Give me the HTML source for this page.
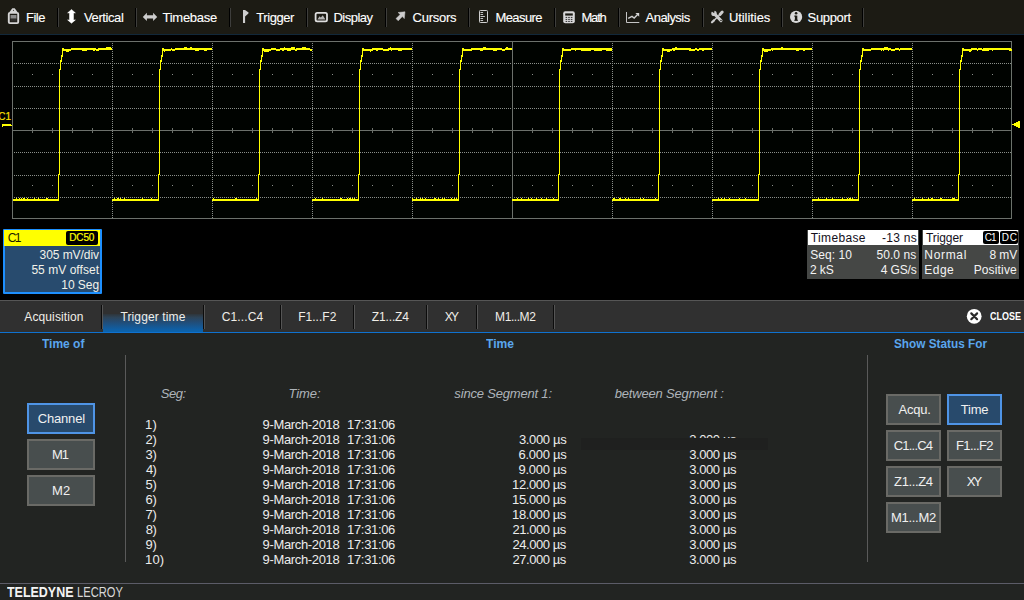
<!DOCTYPE html>
<html lang="en">
<head>
<meta charset="utf-8">
<title>Trigger time status</title>
<style>
html,body{margin:0;padding:0;background:#000;}
body{width:1024px;height:600px;overflow:hidden;position:relative;font-family:"Liberation Sans",sans-serif;}
.a{position:absolute;}
.t{position:absolute;white-space:pre;font-family:"Liberation Sans",sans-serif;}
.mn{-webkit-text-stroke:0.12px #fff;}
.sk{-webkit-text-stroke:0.2px currentColor;}
#menubar{left:0;top:0;width:1024px;height:34px;background:#1c1b14;border-bottom:1px solid #12283a;}
.sep{position:absolute;top:8px;width:1px;height:19px;background:#000;border-right:1px solid #3e3e3c;}
#tabbar{left:0;top:300px;width:1024px;height:31px;background:#303030;border-top:1px solid #565656;border-bottom:1px solid #0f72d0;}
.tsep{position:absolute;top:4px;width:1px;height:24px;background:#0c0c0c;border-right:1px solid #555;}
#activetab{left:103px;top:0;width:100px;height:31px;background:linear-gradient(to bottom,#303030 0,#303030 12.5px,#2e373e 13.5px,#2d4458 16.5px,#234b73 20.5px,#19558c 24.5px,#0f5fa5 28.5px,#0a64af 31px);}
#panel{left:0;top:333px;width:1024px;height:267px;background:#222422;}
.vdiv{position:absolute;width:1px;background:#5a5a5a;}
.btn{position:absolute;box-sizing:border-box;border:2px solid #6a6a66;background:#484e4e;}
.btn.on{border-color:#4f94e6;background:#284a6c;}
#footline{left:0;top:583px;width:1024px;height:1px;background:#5c5c68;}
.box{position:absolute;}
</style>
</head>
<body>
<div id="menubar" class="a">
<div class="sep" style="left:57px"></div>
<div class="sep" style="left:135px"></div>
<div class="sep" style="left:229px"></div>
<div class="sep" style="left:306px"></div>
<div class="sep" style="left:385px"></div>
<div class="sep" style="left:468px"></div>
<div class="sep" style="left:554px"></div>
<div class="sep" style="left:618px"></div>
<div class="sep" style="left:702px"></div>
<div class="sep" style="left:781px"></div>
<div class="sep" style="left:862px"></div>
<svg class="a" style="left:0;top:0" width="1024" height="34" viewBox="0 0 1024 34">
<!-- File: clipboard -->
<g>
<path d="M9.9 12.6 L9.9 11.6 L12.3 8.2 L14.7 8.2 L17.1 11.6 L17.1 12.6z" fill="#d2d2d2"/>
<rect x="8.8" y="12.9" width="9.4" height="10.2" rx="1.1" fill="none" stroke="#d6d6d6" stroke-width="1.9"/>
<rect x="10.5" y="15" width="6" height="3.7" fill="#8c8c8c"/>
<rect x="10.5" y="18.7" width="6" height="2.8" fill="#2e2d2a"/>
<circle cx="13.5" cy="10.4" r="0.55" fill="#55544f"/>
</g>
<!-- Vertical arrow -->
<path d="M71.5 9.5 L75.4 12.9 L73.5 12.9 L73.5 19.9 L75.4 19.9 L71.5 23.3 L67.6 19.9 L69.5 19.9 L69.5 12.9 L67.6 12.9z" fill="#ffffff" stroke="#ffffff" stroke-width="0.5" stroke-linejoin="round"/>
<!-- Timebase arrow -->
<path d="M142.8 16.9 L146.9 12.8 L146.9 15.2 L153.1 15.2 L153.1 12.8 L157.2 16.9 L153.1 21 L153.1 18.6 L146.9 18.6 L146.9 21z" fill="#cdcdcd"/>
<!-- Trigger flag -->
<path d="M243 10 L245 10 L248.6 12.6 L248.4 13.6 L245.1 16.6 L245.1 23 L243 23z" fill="#cdcdcd"/>
<!-- Display -->
<rect x="315.6" y="12.8" width="11.4" height="8.6" rx="1.6" fill="none" stroke="#dedede" stroke-width="1.8"/>
<path d="M317.4 19.4 L319.6 16.2 L320.8 17.4 L322.8 15.2 L325.4 19.4z" fill="#b4b4b4"/>
<!-- Cursors arrow -->
<path d="M405 11.8 L404.3 18.6 L402.3 16.6 L398.2 20.8 L396 18.6 L400.2 14.5 L398.1 12.5z" fill="#cdcdcd" stroke="#cdcdcd" stroke-width="0.5" stroke-linejoin="round"/>
<!-- Measure ruler -->
<rect x="479.5" y="10.5" width="8" height="12" rx="0.8" fill="none" stroke="#cfcfcf" stroke-width="1"/>
<path d="M480.5 12.5h2.6M480.5 14.5h2.6M480.5 16.5h4.4M480.5 18.5h2.6M480.5 20.5h2.6" stroke="#c4c4c4" stroke-width="1"/>
<!-- Math calculator -->
<rect x="563.2" y="11.3" width="11.6" height="12" rx="2" fill="#d8d8d8"/>
<rect x="565.2" y="13.4" width="7.6" height="2.2" fill="#1c1b14"/>
<path d="M565.6 17.4h1.6M568.2 17.4h1.6M570.8 17.4h1.6M565.6 19.4h1.6M568.2 19.4h1.6M570.8 19.4h1.6M565.6 21.4h1.6M568.2 21.4h1.6M570.8 21.4h1.6" stroke="#2a2a2a" stroke-width="1"/>
<!-- Analysis -->
<path d="M626.5 12 V22.5 H639.3" fill="none" stroke="#c4c4c4" stroke-width="1"/>
<path d="M628.2 18.4 L632 16.4 L634.2 18 L637.6 14.6" fill="none" stroke="#cfcfcf" stroke-width="1.4"/>
<path d="M635.4 13 L639.2 13 L639.2 16.8z" fill="#d6d6d6"/>
<!-- Utilities -->
<g fill="none" stroke="#cdcdcd" stroke-linecap="round">
<path d="M715.2 14.6 L721 20.6" stroke-width="3"/>
<path d="M722.2 12.1 L720 14.5" stroke-width="3"/>
<path d="M719.4 15.2 L713.6 20.8" stroke-width="1.5" stroke-linecap="butt"/>
<path d="M714 20.4 L712 22.3" stroke-width="2.2"/>
</g>
<circle cx="714" cy="13.4" r="2.7" fill="#cdcdcd"/>
<path d="M710.4 10.6 L714.2 13.2 L714.6 9.6 z" fill="#1c1b14"/>
<circle cx="721" cy="20.6" r="0.75" fill="#1c1b14"/>
<!-- Support -->
<circle cx="796.1" cy="16.9" r="6.1" fill="#d8d8d8"/>
<rect x="794.9" y="15.6" width="2.4" height="5" fill="#1c1b14"/>
<rect x="794.2" y="15.6" width="1.4" height="1" fill="#1c1b14"/>
<rect x="794.2" y="19.8" width="3.8" height="0.9" fill="#1c1b14"/>
<circle cx="796.1" cy="13.3" r="1.3" fill="#1c1b14"/>
</svg>

</div>
<svg width="1024" height="190" viewBox="0 35 1024 190" style="position:absolute;left:0;top:35px" shape-rendering="crispEdges">
<rect x="12" y="41" width="1000" height="178" fill="#000300"/>
<line x1="14" x2="1011" y1="63.5" y2="63.5" stroke="#8a8f8a" stroke-width="1" stroke-dasharray="1 1" stroke-dashoffset="0"/>
<line x1="14" x2="1011" y1="86.5" y2="86.5" stroke="#8a8f8a" stroke-width="1" stroke-dasharray="1 1" stroke-dashoffset="0"/>
<line x1="14" x2="1011" y1="108.5" y2="108.5" stroke="#8a8f8a" stroke-width="1" stroke-dasharray="1 1" stroke-dashoffset="0"/>
<line x1="14" x2="1011" y1="152.5" y2="152.5" stroke="#8a8f8a" stroke-width="1" stroke-dasharray="1 1" stroke-dashoffset="0"/>
<line x1="14" x2="1011" y1="175.5" y2="175.5" stroke="#8a8f8a" stroke-width="1" stroke-dasharray="1 1" stroke-dashoffset="0"/>
<line x1="14" x2="1011" y1="197.5" y2="197.5" stroke="#8a8f8a" stroke-width="1" stroke-dasharray="1 1" stroke-dashoffset="0"/>
<line y1="43" y2="218" x1="112.5" x2="112.5" stroke="#8a8f8a" stroke-width="1" stroke-dasharray="1 1"/>
<line y1="43" y2="218" x1="212.5" x2="212.5" stroke="#8a8f8a" stroke-width="1" stroke-dasharray="1 1"/>
<line y1="43" y2="218" x1="312.5" x2="312.5" stroke="#8a8f8a" stroke-width="1" stroke-dasharray="1 1"/>
<line y1="43" y2="218" x1="412.5" x2="412.5" stroke="#8a8f8a" stroke-width="1" stroke-dasharray="1 1"/>
<line y1="43" y2="218" x1="612.5" x2="612.5" stroke="#8a8f8a" stroke-width="1" stroke-dasharray="1 1"/>
<line y1="43" y2="218" x1="712.5" x2="712.5" stroke="#8a8f8a" stroke-width="1" stroke-dasharray="1 1"/>
<line y1="43" y2="218" x1="812.5" x2="812.5" stroke="#8a8f8a" stroke-width="1" stroke-dasharray="1 1"/>
<line y1="43" y2="218" x1="912.5" x2="912.5" stroke="#8a8f8a" stroke-width="1" stroke-dasharray="1 1"/>
<path d="M32 74.5h1M52 74.5h1M72 74.5h1M92 74.5h1M132 74.5h1M152 74.5h1M172 74.5h1M192 74.5h1M232 74.5h1M252 74.5h1M272 74.5h1M292 74.5h1M332 74.5h1M352 74.5h1M372 74.5h1M392 74.5h1M432 74.5h1M452 74.5h1M472 74.5h1M492 74.5h1M532 74.5h1M552 74.5h1M572 74.5h1M592 74.5h1M632 74.5h1M652 74.5h1M672 74.5h1M692 74.5h1M732 74.5h1M752 74.5h1M772 74.5h1M792 74.5h1M832 74.5h1M852 74.5h1M872 74.5h1M892 74.5h1M932 74.5h1M952 74.5h1M972 74.5h1M992 74.5h1M32 185.5h1M52 185.5h1M72 185.5h1M92 185.5h1M132 185.5h1M152 185.5h1M172 185.5h1M192 185.5h1M232 185.5h1M252 185.5h1M272 185.5h1M292 185.5h1M332 185.5h1M352 185.5h1M372 185.5h1M392 185.5h1M432 185.5h1M452 185.5h1M472 185.5h1M492 185.5h1M532 185.5h1M552 185.5h1M572 185.5h1M592 185.5h1M632 185.5h1M652 185.5h1M672 185.5h1M692 185.5h1M732 185.5h1M752 185.5h1M772 185.5h1M792 185.5h1M832 185.5h1M852 185.5h1M872 185.5h1M892 185.5h1M932 185.5h1M952 185.5h1M972 185.5h1M992 185.5h1" stroke="#8a8f8a" stroke-width="1" fill="none"/>
<line x1="12" x2="1012" y1="130.5" y2="130.5" stroke="#6c716b"/>
<line x1="512.5" x2="512.5" y1="41" y2="219" stroke="#6c716b"/>
<path d="M32.5 128v5M52.5 128v5M72.5 128v5M92.5 128v5M132.5 128v5M152.5 128v5M172.5 128v5M192.5 128v5M232.5 128v5M252.5 128v5M272.5 128v5M292.5 128v5M332.5 128v5M352.5 128v5M372.5 128v5M392.5 128v5M432.5 128v5M452.5 128v5M472.5 128v5M492.5 128v5M532.5 128v5M552.5 128v5M572.5 128v5M592.5 128v5M632.5 128v5M652.5 128v5M672.5 128v5M692.5 128v5M732.5 128v5M752.5 128v5M772.5 128v5M792.5 128v5M832.5 128v5M852.5 128v5M872.5 128v5M892.5 128v5M932.5 128v5M952.5 128v5M972.5 128v5M992.5 128v5" stroke="#6c716b" fill="none"/>
<rect x="12.5" y="41.5" width="999" height="177" fill="none" stroke="#6c716b"/>
<path d="M13 199h1v2h-1zM14 199h1v2h-1zM15 199h1v2h-1zM16 198h1v3h-1zM17 199h1v2h-1zM18 199h1v2h-1zM19 198h1v3h-1zM20 199h1v2h-1zM21 198h1v3h-1zM22 199h1v2h-1zM23 198h1v3h-1zM24 198h1v3h-1zM25 199h1v2h-1zM26 199h1v2h-1zM27 198h1v3h-1zM28 199h1v2h-1zM29 199h1v2h-1zM30 199h1v2h-1zM31 199h1v2h-1zM32 199h1v2h-1zM33 199h1v2h-1zM34 198h1v3h-1zM35 199h1v2h-1zM36 199h1v2h-1zM37 199h1v2h-1zM38 198h1v3h-1zM39 199h1v2h-1zM40 199h1v2h-1zM41 199h1v2h-1zM42 199h1v2h-1zM43 199h1v2h-1zM44 199h1v2h-1zM45 199h1v2h-1zM46 198h1v3h-1zM47 198h1v3h-1zM48 199h1v2h-1zM49 199h1v2h-1zM50 199h1v2h-1zM51 199h1v2h-1zM52 199h1v2h-1zM53 199h1v2h-1zM54 199h1v2h-1zM55 199h1v2h-1zM56 199h1v2h-1zM57 199h1v2h-1zM58 199h1v2h-1zM58 174h1v27h-1zM59 69h1v106h-1zM60 60h1v10h-1zM61 55h1v7h-1zM62 48h1v9h-1zM63 48h1v3h-1zM64 49h1v2h-1zM65 49h1v2h-1zM66 49h1v3h-1zM67 49h1v3h-1zM68 49h1v3h-1zM69 49h1v2h-1zM70 49h1v2h-1zM71 48h1v2h-1zM72 48h1v2h-1zM73 48h1v2h-1zM74 48h1v2h-1zM75 48h1v2h-1zM76 48h1v2h-1zM77 48h1v2h-1zM78 48h1v2h-1zM79 48h1v2h-1zM80 48h1v2h-1zM81 48h1v2h-1zM82 48h1v3h-1zM83 48h1v3h-1zM84 48h1v3h-1zM85 48h1v3h-1zM86 48h1v3h-1zM87 48h1v2h-1zM88 48h1v2h-1zM89 48h1v2h-1zM90 48h1v2h-1zM91 48h1v2h-1zM92 48h1v2h-1zM93 48h1v3h-1zM94 48h1v3h-1zM95 48h1v2h-1zM96 49h1v2h-1zM97 49h1v2h-1zM98 48h1v3h-1zM99 48h1v2h-1zM100 48h1v2h-1zM101 48h1v2h-1zM102 48h1v2h-1zM103 48h1v2h-1zM104 48h1v2h-1zM105 48h1v2h-1zM106 47h1v3h-1zM107 47h1v3h-1zM108 47h1v3h-1zM109 47h1v3h-1zM110 47h1v3h-1zM111 48h1v2h-1zM112 199h1v2h-1zM113 199h1v2h-1zM114 198h1v3h-1zM115 199h1v2h-1zM116 199h1v2h-1zM117 198h1v3h-1zM118 198h1v3h-1zM119 199h1v2h-1zM120 198h1v3h-1zM121 199h1v2h-1zM122 199h1v2h-1zM123 199h1v2h-1zM124 198h1v3h-1zM125 199h1v2h-1zM126 199h1v2h-1zM127 199h1v2h-1zM128 199h1v2h-1zM129 199h1v2h-1zM130 199h1v2h-1zM131 199h1v2h-1zM132 199h1v2h-1zM133 199h1v2h-1zM134 199h1v2h-1zM135 199h1v2h-1zM136 199h1v2h-1zM137 199h1v2h-1zM138 199h1v2h-1zM139 199h1v2h-1zM140 199h1v2h-1zM141 199h1v2h-1zM142 198h1v3h-1zM143 199h1v2h-1zM144 199h1v2h-1zM145 199h1v2h-1zM146 199h1v2h-1zM147 199h1v2h-1zM148 199h1v2h-1zM149 199h1v2h-1zM150 199h1v2h-1zM151 198h1v3h-1zM152 199h1v2h-1zM153 199h1v2h-1zM154 199h1v2h-1zM155 199h1v2h-1zM156 199h1v2h-1zM157 199h1v2h-1zM158 198h1v3h-1zM158 174h1v27h-1zM159 69h1v106h-1zM160 60h1v10h-1zM161 55h1v7h-1zM162 48h1v9h-1zM163 48h1v3h-1zM164 49h1v3h-1zM165 49h1v2h-1zM166 49h1v2h-1zM167 49h1v2h-1zM168 49h1v2h-1zM169 49h1v2h-1zM170 49h1v2h-1zM171 48h1v2h-1zM172 49h1v2h-1zM173 49h1v2h-1zM174 49h1v2h-1zM175 48h1v2h-1zM176 48h1v2h-1zM177 48h1v2h-1zM178 48h1v2h-1zM179 48h1v2h-1zM180 48h1v2h-1zM181 48h1v2h-1zM182 48h1v2h-1zM183 48h1v2h-1zM184 47h1v3h-1zM185 47h1v3h-1zM186 47h1v3h-1zM187 48h1v2h-1zM188 48h1v2h-1zM189 48h1v2h-1zM190 47h1v3h-1zM191 47h1v3h-1zM192 48h1v2h-1zM193 48h1v2h-1zM194 48h1v2h-1zM195 48h1v3h-1zM196 48h1v3h-1zM197 48h1v3h-1zM198 48h1v3h-1zM199 48h1v2h-1zM200 48h1v2h-1zM201 48h1v2h-1zM202 48h1v2h-1zM203 48h1v2h-1zM204 48h1v3h-1zM205 48h1v3h-1zM206 48h1v3h-1zM207 48h1v2h-1zM208 48h1v2h-1zM209 48h1v2h-1zM210 48h1v2h-1zM211 48h1v2h-1zM212 199h1v2h-1zM213 198h1v3h-1zM214 199h1v2h-1zM215 199h1v2h-1zM216 199h1v2h-1zM217 199h1v2h-1zM218 199h1v2h-1zM219 199h1v2h-1zM220 199h1v2h-1zM221 199h1v2h-1zM222 199h1v2h-1zM223 199h1v2h-1zM224 199h1v2h-1zM225 199h1v2h-1zM226 199h1v2h-1zM227 199h1v2h-1zM228 199h1v2h-1zM229 199h1v2h-1zM230 199h1v2h-1zM231 199h1v2h-1zM232 199h1v2h-1zM233 199h1v2h-1zM234 199h1v2h-1zM235 198h1v3h-1zM236 198h1v3h-1zM237 199h1v2h-1zM238 199h1v2h-1zM239 199h1v2h-1zM240 199h1v2h-1zM241 199h1v2h-1zM242 199h1v2h-1zM243 199h1v2h-1zM244 199h1v2h-1zM245 199h1v2h-1zM246 199h1v2h-1zM247 199h1v2h-1zM248 199h1v2h-1zM249 199h1v2h-1zM250 199h1v2h-1zM251 199h1v2h-1zM252 199h1v2h-1zM253 199h1v2h-1zM254 199h1v2h-1zM255 199h1v2h-1zM256 198h1v3h-1zM257 199h1v2h-1zM258 199h1v2h-1zM258 174h1v27h-1zM259 69h1v106h-1zM260 60h1v10h-1zM261 55h1v7h-1zM262 48h1v9h-1zM263 48h1v3h-1zM264 49h1v3h-1zM265 49h1v3h-1zM266 49h1v3h-1zM267 49h1v3h-1zM268 49h1v3h-1zM269 49h1v2h-1zM270 49h1v2h-1zM271 48h1v2h-1zM272 48h1v2h-1zM273 48h1v2h-1zM274 48h1v2h-1zM275 48h1v2h-1zM276 49h1v2h-1zM277 49h1v2h-1zM278 49h1v2h-1zM279 49h1v2h-1zM280 48h1v2h-1zM281 48h1v2h-1zM282 48h1v3h-1zM283 48h1v3h-1zM284 47h1v3h-1zM285 48h1v2h-1zM286 48h1v2h-1zM287 48h1v3h-1zM288 48h1v3h-1zM289 48h1v3h-1zM290 48h1v3h-1zM291 47h1v3h-1zM292 47h1v3h-1zM293 47h1v3h-1zM294 47h1v3h-1zM295 49h1v2h-1zM296 48h1v3h-1zM297 48h1v2h-1zM298 48h1v2h-1zM299 48h1v2h-1zM300 48h1v2h-1zM301 48h1v2h-1zM302 47h1v3h-1zM303 47h1v3h-1zM304 47h1v3h-1zM305 47h1v3h-1zM306 48h1v2h-1zM307 48h1v2h-1zM308 48h1v2h-1zM309 48h1v2h-1zM310 49h1v2h-1zM311 49h1v2h-1zM312 199h1v2h-1zM313 199h1v2h-1zM314 199h1v2h-1zM315 198h1v3h-1zM316 199h1v2h-1zM317 199h1v2h-1zM318 199h1v2h-1zM319 199h1v2h-1zM320 199h1v2h-1zM321 199h1v2h-1zM322 198h1v3h-1zM323 199h1v2h-1zM324 199h1v2h-1zM325 199h1v2h-1zM326 199h1v2h-1zM327 199h1v2h-1zM328 199h1v2h-1zM329 199h1v2h-1zM330 199h1v2h-1zM331 199h1v2h-1zM332 199h1v2h-1zM333 199h1v2h-1zM334 199h1v2h-1zM335 199h1v2h-1zM336 199h1v2h-1zM337 199h1v2h-1zM338 199h1v2h-1zM339 199h1v2h-1zM340 198h1v3h-1zM341 198h1v3h-1zM342 199h1v2h-1zM343 199h1v2h-1zM344 199h1v2h-1zM345 199h1v2h-1zM346 199h1v2h-1zM347 198h1v3h-1zM348 199h1v2h-1zM349 198h1v3h-1zM350 198h1v3h-1zM351 199h1v2h-1zM352 198h1v3h-1zM353 199h1v2h-1zM354 198h1v3h-1zM355 199h1v2h-1zM356 199h1v2h-1zM357 199h1v2h-1zM358 199h1v2h-1zM358 174h1v27h-1zM359 69h1v106h-1zM360 60h1v10h-1zM361 55h1v7h-1zM362 48h1v9h-1zM363 48h1v3h-1zM364 49h1v2h-1zM365 49h1v2h-1zM366 49h1v2h-1zM367 49h1v2h-1zM368 49h1v2h-1zM369 49h1v2h-1zM370 49h1v3h-1zM371 49h1v2h-1zM372 48h1v3h-1zM373 48h1v2h-1zM374 48h1v2h-1zM375 48h1v2h-1zM376 48h1v3h-1zM377 48h1v3h-1zM378 48h1v2h-1zM379 48h1v2h-1zM380 48h1v2h-1zM381 48h1v2h-1zM382 48h1v2h-1zM383 49h1v2h-1zM384 49h1v2h-1zM385 49h1v2h-1zM386 49h1v2h-1zM387 49h1v2h-1zM388 48h1v3h-1zM389 48h1v2h-1zM390 47h1v3h-1zM391 48h1v3h-1zM392 48h1v2h-1zM393 48h1v2h-1zM394 48h1v2h-1zM395 48h1v2h-1zM396 48h1v2h-1zM397 48h1v2h-1zM398 48h1v3h-1zM399 48h1v3h-1zM400 48h1v3h-1zM401 48h1v3h-1zM402 48h1v2h-1zM403 48h1v2h-1zM404 48h1v2h-1zM405 48h1v2h-1zM406 48h1v2h-1zM407 48h1v2h-1zM408 48h1v2h-1zM409 48h1v2h-1zM410 48h1v2h-1zM411 48h1v2h-1zM412 198h1v3h-1zM413 199h1v2h-1zM414 199h1v2h-1zM415 199h1v2h-1zM416 198h1v3h-1zM417 199h1v2h-1zM418 199h1v2h-1zM419 199h1v2h-1zM420 198h1v3h-1zM421 199h1v2h-1zM422 198h1v3h-1zM423 199h1v2h-1zM424 199h1v2h-1zM425 198h1v3h-1zM426 199h1v2h-1zM427 199h1v2h-1zM428 199h1v2h-1zM429 199h1v2h-1zM430 199h1v2h-1zM431 199h1v2h-1zM432 199h1v2h-1zM433 199h1v2h-1zM434 198h1v3h-1zM435 198h1v3h-1zM436 199h1v2h-1zM437 199h1v2h-1zM438 198h1v3h-1zM439 199h1v2h-1zM440 199h1v2h-1zM441 199h1v2h-1zM442 198h1v3h-1zM443 199h1v2h-1zM444 198h1v3h-1zM445 199h1v2h-1zM446 199h1v2h-1zM447 199h1v2h-1zM448 199h1v2h-1zM449 199h1v2h-1zM450 199h1v2h-1zM451 198h1v3h-1zM452 199h1v2h-1zM453 199h1v2h-1zM454 198h1v3h-1zM455 199h1v2h-1zM456 198h1v3h-1zM457 199h1v2h-1zM458 199h1v2h-1zM458 174h1v27h-1zM459 69h1v106h-1zM460 60h1v10h-1zM461 55h1v7h-1zM462 48h1v9h-1zM463 48h1v3h-1zM464 49h1v2h-1zM465 49h1v2h-1zM466 49h1v2h-1zM467 49h1v2h-1zM468 49h1v2h-1zM469 49h1v2h-1zM470 49h1v2h-1zM471 48h1v3h-1zM472 48h1v2h-1zM473 48h1v2h-1zM474 48h1v2h-1zM475 48h1v2h-1zM476 48h1v2h-1zM477 48h1v2h-1zM478 48h1v2h-1zM479 48h1v2h-1zM480 48h1v3h-1zM481 48h1v3h-1zM482 48h1v3h-1zM483 47h1v3h-1zM484 47h1v3h-1zM485 47h1v3h-1zM486 48h1v2h-1zM487 48h1v2h-1zM488 48h1v2h-1zM489 48h1v2h-1zM490 48h1v2h-1zM491 48h1v2h-1zM492 48h1v2h-1zM493 48h1v3h-1zM494 48h1v3h-1zM495 48h1v3h-1zM496 48h1v3h-1zM497 48h1v2h-1zM498 48h1v2h-1zM499 48h1v2h-1zM500 48h1v2h-1zM501 48h1v2h-1zM502 49h1v2h-1zM503 49h1v2h-1zM504 49h1v2h-1zM505 48h1v2h-1zM506 47h1v3h-1zM507 47h1v3h-1zM508 48h1v2h-1zM509 48h1v2h-1zM510 48h1v2h-1zM511 48h1v2h-1zM512 199h1v2h-1zM513 199h1v2h-1zM514 199h1v2h-1zM515 199h1v2h-1zM516 199h1v2h-1zM517 198h1v3h-1zM518 199h1v2h-1zM519 199h1v2h-1zM520 199h1v2h-1zM521 198h1v3h-1zM522 199h1v2h-1zM523 199h1v2h-1zM524 199h1v2h-1zM525 199h1v2h-1zM526 199h1v2h-1zM527 199h1v2h-1zM528 198h1v3h-1zM529 199h1v2h-1zM530 199h1v2h-1zM531 198h1v3h-1zM532 199h1v2h-1zM533 199h1v2h-1zM534 199h1v2h-1zM535 199h1v2h-1zM536 198h1v3h-1zM537 199h1v2h-1zM538 199h1v2h-1zM539 199h1v2h-1zM540 199h1v2h-1zM541 198h1v3h-1zM542 199h1v2h-1zM543 199h1v2h-1zM544 199h1v2h-1zM545 199h1v2h-1zM546 198h1v3h-1zM547 199h1v2h-1zM548 199h1v2h-1zM549 199h1v2h-1zM550 199h1v2h-1zM551 199h1v2h-1zM552 199h1v2h-1zM553 198h1v3h-1zM554 199h1v2h-1zM555 199h1v2h-1zM556 199h1v2h-1zM557 199h1v2h-1zM558 199h1v2h-1zM558 174h1v27h-1zM559 69h1v106h-1zM560 60h1v10h-1zM561 55h1v7h-1zM562 48h1v9h-1zM563 48h1v3h-1zM564 49h1v2h-1zM565 49h1v2h-1zM566 49h1v2h-1zM567 49h1v2h-1zM568 49h1v2h-1zM569 49h1v2h-1zM570 49h1v2h-1zM571 48h1v2h-1zM572 48h1v2h-1zM573 48h1v2h-1zM574 48h1v2h-1zM575 48h1v3h-1zM576 48h1v2h-1zM577 48h1v2h-1zM578 48h1v2h-1zM579 48h1v2h-1zM580 48h1v2h-1zM581 48h1v3h-1zM582 48h1v3h-1zM583 48h1v3h-1zM584 48h1v3h-1zM585 48h1v3h-1zM586 48h1v3h-1zM587 48h1v3h-1zM588 48h1v3h-1zM589 48h1v3h-1zM590 48h1v3h-1zM591 48h1v2h-1zM592 48h1v2h-1zM593 48h1v2h-1zM594 48h1v3h-1zM595 48h1v3h-1zM596 48h1v3h-1zM597 48h1v3h-1zM598 48h1v3h-1zM599 48h1v3h-1zM600 48h1v3h-1zM601 48h1v3h-1zM602 48h1v2h-1zM603 48h1v2h-1zM604 48h1v2h-1zM605 48h1v2h-1zM606 48h1v3h-1zM607 48h1v3h-1zM608 48h1v3h-1zM609 48h1v3h-1zM610 48h1v3h-1zM611 48h1v3h-1zM612 199h1v2h-1zM613 198h1v3h-1zM614 198h1v3h-1zM615 199h1v2h-1zM616 199h1v2h-1zM617 199h1v2h-1zM618 199h1v2h-1zM619 198h1v3h-1zM620 198h1v3h-1zM621 199h1v2h-1zM622 199h1v2h-1zM623 199h1v2h-1zM624 199h1v2h-1zM625 198h1v3h-1zM626 199h1v2h-1zM627 199h1v2h-1zM628 198h1v3h-1zM629 199h1v2h-1zM630 199h1v2h-1zM631 199h1v2h-1zM632 199h1v2h-1zM633 199h1v2h-1zM634 199h1v2h-1zM635 199h1v2h-1zM636 199h1v2h-1zM637 199h1v2h-1zM638 199h1v2h-1zM639 199h1v2h-1zM640 198h1v3h-1zM641 199h1v2h-1zM642 199h1v2h-1zM643 198h1v3h-1zM644 199h1v2h-1zM645 199h1v2h-1zM646 199h1v2h-1zM647 199h1v2h-1zM648 199h1v2h-1zM649 199h1v2h-1zM650 199h1v2h-1zM651 199h1v2h-1zM652 199h1v2h-1zM653 199h1v2h-1zM654 199h1v2h-1zM655 198h1v3h-1zM656 199h1v2h-1zM657 199h1v2h-1zM658 199h1v2h-1zM658 174h1v27h-1zM659 69h1v106h-1zM660 60h1v10h-1zM661 55h1v7h-1zM662 48h1v9h-1zM663 48h1v3h-1zM664 49h1v2h-1zM665 49h1v2h-1zM666 49h1v2h-1zM667 49h1v3h-1zM668 49h1v3h-1zM669 49h1v3h-1zM670 49h1v2h-1zM671 49h1v2h-1zM672 48h1v2h-1zM673 48h1v3h-1zM674 48h1v3h-1zM675 47h1v3h-1zM676 47h1v3h-1zM677 48h1v2h-1zM678 48h1v2h-1zM679 48h1v2h-1zM680 48h1v2h-1zM681 48h1v2h-1zM682 48h1v2h-1zM683 48h1v2h-1zM684 48h1v2h-1zM685 48h1v2h-1zM686 48h1v2h-1zM687 48h1v2h-1zM688 48h1v2h-1zM689 48h1v3h-1zM690 48h1v3h-1zM691 49h1v2h-1zM692 49h1v2h-1zM693 49h1v2h-1zM694 49h1v2h-1zM695 48h1v2h-1zM696 48h1v2h-1zM697 49h1v2h-1zM698 49h1v2h-1zM699 48h1v2h-1zM700 48h1v2h-1zM701 48h1v2h-1zM702 48h1v3h-1zM703 48h1v3h-1zM704 48h1v2h-1zM705 48h1v2h-1zM706 48h1v2h-1zM707 48h1v2h-1zM708 48h1v2h-1zM709 48h1v2h-1zM710 48h1v2h-1zM711 48h1v2h-1zM712 199h1v2h-1zM713 199h1v2h-1zM714 199h1v2h-1zM715 199h1v2h-1zM716 199h1v2h-1zM717 199h1v2h-1zM718 198h1v3h-1zM719 199h1v2h-1zM720 199h1v2h-1zM721 198h1v3h-1zM722 199h1v2h-1zM723 199h1v2h-1zM724 198h1v3h-1zM725 199h1v2h-1zM726 199h1v2h-1zM727 199h1v2h-1zM728 199h1v2h-1zM729 198h1v3h-1zM730 199h1v2h-1zM731 199h1v2h-1zM732 199h1v2h-1zM733 199h1v2h-1zM734 199h1v2h-1zM735 199h1v2h-1zM736 199h1v2h-1zM737 199h1v2h-1zM738 199h1v2h-1zM739 198h1v3h-1zM740 199h1v2h-1zM741 199h1v2h-1zM742 199h1v2h-1zM743 199h1v2h-1zM744 199h1v2h-1zM745 198h1v3h-1zM746 199h1v2h-1zM747 199h1v2h-1zM748 199h1v2h-1zM749 199h1v2h-1zM750 199h1v2h-1zM751 199h1v2h-1zM752 199h1v2h-1zM753 199h1v2h-1zM754 199h1v2h-1zM755 199h1v2h-1zM756 199h1v2h-1zM757 199h1v2h-1zM758 199h1v2h-1zM758 174h1v27h-1zM759 69h1v106h-1zM760 60h1v10h-1zM761 55h1v7h-1zM762 48h1v9h-1zM763 48h1v3h-1zM764 49h1v3h-1zM765 49h1v3h-1zM766 49h1v3h-1zM767 49h1v3h-1zM768 49h1v2h-1zM769 49h1v2h-1zM770 49h1v2h-1zM771 48h1v2h-1zM772 48h1v3h-1zM773 48h1v2h-1zM774 48h1v2h-1zM775 48h1v2h-1zM776 48h1v2h-1zM777 48h1v2h-1zM778 48h1v2h-1zM779 48h1v2h-1zM780 48h1v2h-1zM781 47h1v3h-1zM782 47h1v3h-1zM783 48h1v2h-1zM784 48h1v2h-1zM785 48h1v2h-1zM786 48h1v2h-1zM787 48h1v2h-1zM788 48h1v2h-1zM789 48h1v2h-1zM790 48h1v2h-1zM791 48h1v2h-1zM792 48h1v2h-1zM793 48h1v2h-1zM794 48h1v2h-1zM795 48h1v2h-1zM796 48h1v3h-1zM797 48h1v3h-1zM798 48h1v3h-1zM799 48h1v2h-1zM800 48h1v2h-1zM801 48h1v2h-1zM802 48h1v2h-1zM803 48h1v3h-1zM804 48h1v3h-1zM805 48h1v2h-1zM806 48h1v2h-1zM807 48h1v2h-1zM808 48h1v2h-1zM809 48h1v2h-1zM810 48h1v2h-1zM811 48h1v2h-1zM812 199h1v2h-1zM813 199h1v2h-1zM814 199h1v2h-1zM815 199h1v2h-1zM816 199h1v2h-1zM817 199h1v2h-1zM818 198h1v3h-1zM819 199h1v2h-1zM820 199h1v2h-1zM821 199h1v2h-1zM822 199h1v2h-1zM823 199h1v2h-1zM824 199h1v2h-1zM825 199h1v2h-1zM826 198h1v3h-1zM827 199h1v2h-1zM828 199h1v2h-1zM829 199h1v2h-1zM830 199h1v2h-1zM831 199h1v2h-1zM832 198h1v3h-1zM833 199h1v2h-1zM834 199h1v2h-1zM835 199h1v2h-1zM836 199h1v2h-1zM837 199h1v2h-1zM838 199h1v2h-1zM839 199h1v2h-1zM840 199h1v2h-1zM841 199h1v2h-1zM842 198h1v3h-1zM843 199h1v2h-1zM844 199h1v2h-1zM845 199h1v2h-1zM846 199h1v2h-1zM847 198h1v3h-1zM848 199h1v2h-1zM849 198h1v3h-1zM850 198h1v3h-1zM851 199h1v2h-1zM852 198h1v3h-1zM853 199h1v2h-1zM854 199h1v2h-1zM855 199h1v2h-1zM856 199h1v2h-1zM857 199h1v2h-1zM858 199h1v2h-1zM858 174h1v27h-1zM859 69h1v106h-1zM860 60h1v10h-1zM861 55h1v7h-1zM862 48h1v9h-1zM863 48h1v3h-1zM864 49h1v2h-1zM865 49h1v2h-1zM866 49h1v2h-1zM867 49h1v2h-1zM868 49h1v2h-1zM869 49h1v2h-1zM870 49h1v2h-1zM871 48h1v2h-1zM872 48h1v2h-1zM873 48h1v2h-1zM874 48h1v2h-1zM875 48h1v2h-1zM876 48h1v2h-1zM877 48h1v2h-1zM878 48h1v2h-1zM879 48h1v2h-1zM880 48h1v2h-1zM881 48h1v3h-1zM882 48h1v2h-1zM883 48h1v3h-1zM884 47h1v3h-1zM885 47h1v3h-1zM886 47h1v3h-1zM887 47h1v3h-1zM888 48h1v3h-1zM889 48h1v2h-1zM890 48h1v2h-1zM891 49h1v2h-1zM892 49h1v2h-1zM893 49h1v2h-1zM894 49h1v2h-1zM895 48h1v2h-1zM896 48h1v2h-1zM897 48h1v2h-1zM898 48h1v2h-1zM899 49h1v2h-1zM900 48h1v2h-1zM901 48h1v2h-1zM902 48h1v2h-1zM903 48h1v2h-1zM904 48h1v2h-1zM905 48h1v2h-1zM906 48h1v2h-1zM907 48h1v2h-1zM908 48h1v2h-1zM909 48h1v2h-1zM910 48h1v2h-1zM911 48h1v2h-1zM912 199h1v2h-1zM913 199h1v2h-1zM914 198h1v3h-1zM915 199h1v2h-1zM916 199h1v2h-1zM917 199h1v2h-1zM918 199h1v2h-1zM919 199h1v2h-1zM920 199h1v2h-1zM921 199h1v2h-1zM922 198h1v3h-1zM923 199h1v2h-1zM924 199h1v2h-1zM925 199h1v2h-1zM926 199h1v2h-1zM927 199h1v2h-1zM928 198h1v3h-1zM929 199h1v2h-1zM930 199h1v2h-1zM931 198h1v3h-1zM932 198h1v3h-1zM933 199h1v2h-1zM934 199h1v2h-1zM935 199h1v2h-1zM936 199h1v2h-1zM937 199h1v2h-1zM938 199h1v2h-1zM939 199h1v2h-1zM940 198h1v3h-1zM941 198h1v3h-1zM942 199h1v2h-1zM943 199h1v2h-1zM944 199h1v2h-1zM945 199h1v2h-1zM946 199h1v2h-1zM947 199h1v2h-1zM948 199h1v2h-1zM949 199h1v2h-1zM950 199h1v2h-1zM951 199h1v2h-1zM952 198h1v3h-1zM953 198h1v3h-1zM954 198h1v3h-1zM955 199h1v2h-1zM956 199h1v2h-1zM957 199h1v2h-1zM958 199h1v2h-1zM958 174h1v27h-1zM959 69h1v106h-1zM960 60h1v10h-1zM961 55h1v7h-1zM962 48h1v9h-1zM963 48h1v3h-1zM964 49h1v2h-1zM965 49h1v2h-1zM966 49h1v2h-1zM967 49h1v2h-1zM968 49h1v2h-1zM969 49h1v3h-1zM970 49h1v3h-1zM971 48h1v3h-1zM972 48h1v2h-1zM973 48h1v2h-1zM974 48h1v2h-1zM975 48h1v2h-1zM976 48h1v2h-1zM977 49h1v2h-1zM978 48h1v2h-1zM979 48h1v2h-1zM980 48h1v2h-1zM981 48h1v2h-1zM982 49h1v2h-1zM983 48h1v3h-1zM984 48h1v3h-1zM985 48h1v3h-1zM986 48h1v3h-1zM987 48h1v3h-1zM988 48h1v3h-1zM989 48h1v2h-1zM990 48h1v2h-1zM991 48h1v2h-1zM992 48h1v3h-1zM993 48h1v2h-1zM994 48h1v2h-1zM995 48h1v2h-1zM996 48h1v2h-1zM997 48h1v2h-1zM998 48h1v2h-1zM999 48h1v2h-1zM1000 48h1v2h-1zM1001 48h1v2h-1zM1002 48h1v2h-1zM1003 48h1v2h-1zM1004 48h1v2h-1zM1005 48h1v2h-1zM1006 48h1v2h-1zM1007 48h1v2h-1zM1008 48h1v2h-1zM1009 48h1v3h-1zM1010 48h1v3h-1zM1011 49h1v2h-1z" fill="#ffff00"/>
<path d="M2 124h9v1h1v1h-9v1h-1z" fill="#ffff00"/>
<path d="M1012 124h2v-1h2v-1h2v-1h2v7h-2v-1h-2v-1h-2v-1h-2z" fill="#ffff00"/>
</svg>
<!-- C1 descriptor -->
<div class="box" style="left:3px;top:229px;width:99px;height:65px;background:#1e90ff;border-radius:1px;"></div>
<div class="box" style="left:4px;top:230px;width:96px;height:16px;background:#ffff00;"></div>
<div class="box" style="left:5px;top:246px;width:95px;height:46px;background:#284b6e;"></div>
<div class="box" style="left:66px;top:231px;width:32px;height:14px;background:#000;border-radius:2px;"></div>
<!-- Timebase -->
<div class="box" style="left:807px;top:230px;width:112px;height:49px;background:#454745;"></div>
<div class="box" style="left:808px;top:230px;width:110px;height:15px;background:#fff;"></div>
<!-- Trigger -->
<div class="box" style="left:922px;top:230px;width:97px;height:49px;background:#454745;"></div>
<div class="box" style="left:923px;top:230px;width:95px;height:15px;background:#fff;"></div>
<div class="box" style="left:983px;top:231px;width:16px;height:13px;background:#000;border-radius:2px;"></div>
<div class="box" style="left:1000px;top:231px;width:18px;height:13px;background:#000;border-radius:2px;"></div>
<!-- tab bar -->
<div id="tabbar" class="a">
<div id="activetab" class="a"></div>
<div class="tsep" style="left:101px"></div>
<div class="tsep" style="left:203px"></div>
<div class="tsep" style="left:280px"></div>
<div class="tsep" style="left:353px"></div>
<div class="tsep" style="left:426px"></div>
<div class="tsep" style="left:476px"></div>
<div class="tsep" style="left:553px"></div>
<svg class="a" style="left:966px;top:7px" width="16" height="16" viewBox="0 0 16 16"><circle cx="8.2" cy="8.3" r="7.4" fill="#fff"/><path d="M5.3 5.4l5.8 5.8M11.1 5.4l-5.8 5.8" stroke="#2a2a2a" stroke-width="2.2" stroke-linecap="round"/></svg>
</div>
<div id="panel" class="a"></div>
<div class="vdiv" style="left:125px;top:355px;height:207px"></div>
<div class="vdiv" style="left:867px;top:355px;height:207px"></div>
<div class="box" style="left:581px;top:438px;width:187px;height:12px;background:#1f201f;z-index:5"></div>
<!-- left buttons -->
<div class="btn on" style="left:27px;top:403px;width:68px;height:31px"></div>
<div class="btn" style="left:27px;top:439px;width:68px;height:31px"></div>
<div class="btn" style="left:27px;top:475px;width:68px;height:31px"></div>
<!-- right buttons -->
<div class="btn" style="left:886px;top:394px;width:55px;height:31px"></div>
<div class="btn on" style="left:947px;top:394px;width:55px;height:31px"></div>
<div class="btn" style="left:886px;top:430px;width:55px;height:31px"></div>
<div class="btn" style="left:947px;top:430px;width:55px;height:31px"></div>
<div class="btn" style="left:886px;top:466px;width:55px;height:31px"></div>
<div class="btn" style="left:947px;top:466px;width:55px;height:31px"></div>
<div class="btn" style="left:886px;top:502px;width:55px;height:31px"></div>
<div id="footline" class="a"></div>
<span class="t mn" style="left:25.90px;top:11.00px;font-size:13px;line-height:13px;color:#ffffff;letter-spacing:-0.428px;">File</span>
<span class="t mn" style="left:84.02px;top:11.00px;font-size:13px;line-height:13px;color:#ffffff;letter-spacing:-0.408px;">Vertical</span>
<span class="t mn" style="left:162.49px;top:11.00px;font-size:13px;line-height:13px;color:#ffffff;letter-spacing:-0.256px;">Timebase</span>
<span class="t mn" style="left:256.27px;top:11.00px;font-size:13px;line-height:13px;color:#ffffff;letter-spacing:-0.433px;">Trigger</span>
<span class="t mn" style="left:333.43px;top:11.00px;font-size:13px;line-height:13px;color:#ffffff;letter-spacing:-0.512px;">Display</span>
<span class="t mn" style="left:412.60px;top:11.00px;font-size:13px;line-height:13px;color:#ffffff;letter-spacing:-0.250px;">Cursors</span>
<span class="t mn" style="left:495.43px;top:11.00px;font-size:13px;line-height:13px;color:#ffffff;letter-spacing:-0.569px;">Measure</span>
<span class="t mn" style="left:581.43px;top:11.00px;font-size:13px;line-height:13px;color:#ffffff;letter-spacing:-1.172px;">Math</span>
<span class="t mn" style="left:645.58px;top:11.00px;font-size:13px;line-height:13px;color:#ffffff;letter-spacing:-0.549px;">Analysis</span>
<span class="t mn" style="left:728.94px;top:11.00px;font-size:13px;line-height:13px;color:#ffffff;letter-spacing:-0.068px;">Utilities</span>
<span class="t mn" style="left:807.54px;top:11.00px;font-size:13px;line-height:13px;color:#ffffff;letter-spacing:-0.320px;">Support</span>
<span class="t" style="left:7.78px;top:232.00px;font-size:12px;line-height:12px;color:#1a1a00;letter-spacing:-1.643px;">C1</span>
<span class="t sk" style="left:69.32px;top:233.00px;font-size:10px;line-height:10px;color:#ffff00;letter-spacing:-0.168px;">DC50</span>
<span class="t" style="left:39.54px;top:249.00px;font-size:12px;line-height:12px;color:#f2f2ea;letter-spacing:-0.064px;">305 mV/div</span>
<span class="t" style="left:31.42px;top:264.00px;font-size:12px;line-height:12px;color:#f2f2ea;letter-spacing:0.039px;">55 mV offset</span>
<span class="t" style="left:61.27px;top:279.00px;font-size:12px;line-height:12px;color:#f2f2ea;letter-spacing:-0.028px;">10 Seg</span>
<span class="t" style="left:810.82px;top:232.00px;font-size:12px;line-height:12px;color:#14101c;letter-spacing:0.351px;">Timebase</span>
<span class="t" style="left:882.12px;top:232.00px;font-size:12px;line-height:12px;color:#14101c;letter-spacing:0.251px;">-13 ns</span>
<span class="t" style="left:810.26px;top:249.00px;font-size:12px;line-height:12px;color:#f4f4f4;letter-spacing:0.055px;">Seq: 10</span>
<span class="t" style="left:876.42px;top:249.00px;font-size:12px;line-height:12px;color:#f4f4f4;letter-spacing:0.092px;">50.0 ns</span>
<span class="t" style="left:809.97px;top:264.00px;font-size:12px;line-height:12px;color:#f4f4f4;letter-spacing:-0.087px;">2 kS</span>
<span class="t" style="left:880.80px;top:264.00px;font-size:12px;line-height:12px;color:#f4f4f4;letter-spacing:-0.144px;">4 GS/s</span>
<span class="t" style="left:926.10px;top:232.00px;font-size:12px;line-height:12px;color:#14101c;letter-spacing:-0.113px;">Trigger</span>
<span class="t" style="left:924.35px;top:249.00px;font-size:12px;line-height:12px;color:#f4f4f4;letter-spacing:0.664px;">Normal</span>
<span class="t" style="left:989.42px;top:249.00px;font-size:12px;line-height:12px;color:#f4f4f4;letter-spacing:-0.088px;">8 mV</span>
<span class="t" style="left:924.35px;top:264.00px;font-size:12px;line-height:12px;color:#f4f4f4;letter-spacing:0.438px;">Edge</span>
<span class="t" style="left:973.65px;top:264.00px;font-size:12px;line-height:12px;color:#f4f4f4;letter-spacing:0.150px;">Positive</span>
<span class="t" style="left:984.70px;top:233.00px;font-size:10px;line-height:10px;color:#ffffff;letter-spacing:-0.795px;">C1</span>
<span class="t" style="left:1001.85px;top:233.00px;font-size:10px;line-height:10px;color:#ffffff;letter-spacing:0.730px;">DC</span>
<span class="t sk" style="left:-1.80px;top:112.00px;font-size:10px;line-height:10px;color:#ffe000;letter-spacing:0.000px;">C1</span>
<span class="t" style="left:24.32px;top:311.00px;font-size:12px;line-height:12px;color:#f0eee8;letter-spacing:0.115px;">Acquisition</span>
<span class="t" style="left:120.48px;top:311.00px;font-size:12px;line-height:12px;color:#f0eee8;letter-spacing:0.119px;">Trigger time</span>
<span class="t" style="left:221.82px;top:311.00px;font-size:12px;line-height:12px;color:#f0eee8;letter-spacing:0.097px;">C1...C4</span>
<span class="t" style="left:298.20px;top:311.00px;font-size:12px;line-height:12px;color:#f0eee8;letter-spacing:0.033px;">F1...F2</span>
<span class="t" style="left:371.84px;top:311.00px;font-size:12px;line-height:12px;color:#f0eee8;letter-spacing:-0.146px;">Z1...Z4</span>
<span class="t" style="left:444.78px;top:311.00px;font-size:12px;line-height:12px;color:#f0eee8;letter-spacing:-1.820px;">XY</span>
<span class="t" style="left:495.10px;top:311.00px;font-size:12px;line-height:12px;color:#f0eee8;letter-spacing:-0.438px;">M1...M2</span>
<span class="t" style="left:989.92px;top:312.00px;font-size:10px;line-height:10px;color:#ffffff;letter-spacing:0.000px;font-weight:bold;transform-origin:0 0;transform:scaleX(0.8977);">CLOSE</span>
<span class="t" style="left:42.10px;top:337.00px;font-size:13.5px;line-height:13.5px;color:#5aa6ee;letter-spacing:0.000px;font-weight:bold;transform-origin:0 0;transform:scaleX(0.8881);">Time of</span>
<span class="t" style="left:486.09px;top:337.00px;font-size:13.5px;line-height:13.5px;color:#5aa6ee;letter-spacing:0.000px;font-weight:bold;transform-origin:0 0;transform:scaleX(0.8947);">Time</span>
<span class="t" style="left:893.64px;top:337.00px;font-size:13.5px;line-height:13.5px;color:#5aa6ee;letter-spacing:0.000px;font-weight:bold;transform-origin:0 0;transform:scaleX(0.8743);">Show Status For</span>
<span class="t" style="left:37.71px;top:412.00px;font-size:13px;line-height:13px;color:#f0f0f0;letter-spacing:-0.169px;">Channel</span>
<span class="t" style="left:52.11px;top:448.00px;font-size:13px;line-height:13px;color:#f0f0f0;letter-spacing:-1.102px;">M1</span>
<span class="t" style="left:52.11px;top:484.00px;font-size:13px;line-height:13px;color:#f0f0f0;letter-spacing:0.038px;">M2</span>
<span class="t" style="left:898.49px;top:403.00px;font-size:13px;line-height:13px;color:#f0f0f0;letter-spacing:-0.239px;">Acqu.</span>
<span class="t" style="left:960.79px;top:403.00px;font-size:13px;line-height:13px;color:#f0f0f0;letter-spacing:-0.217px;">Time</span>
<span class="t" style="left:893.71px;top:439.00px;font-size:13px;line-height:13px;color:#f0f0f0;letter-spacing:-0.787px;">C1...C4</span>
<span class="t" style="left:955.90px;top:439.00px;font-size:13px;line-height:13px;color:#f0f0f0;letter-spacing:-0.586px;">F1...F2</span>
<span class="t" style="left:894.05px;top:475.00px;font-size:13px;line-height:13px;color:#f0f0f0;letter-spacing:-0.357px;">Z1...Z4</span>
<span class="t" style="left:966.78px;top:475.00px;font-size:13px;line-height:13px;color:#f0f0f0;letter-spacing:-1.812px;">XY</span>
<span class="t" style="left:891.11px;top:511.00px;font-size:13px;line-height:13px;color:#f0f0f0;letter-spacing:-0.318px;">M1...M2</span>
<span class="t" style="left:160.75px;top:387.00px;font-size:13px;line-height:13px;color:#aeb4ba;letter-spacing:-0.450px;font-style:italic;">Seg:</span>
<span class="t" style="left:288.42px;top:387.00px;font-size:13px;line-height:13px;color:#aeb4ba;letter-spacing:-0.037px;font-style:italic;">Time:</span>
<span class="t" style="left:454.36px;top:387.00px;font-size:13px;line-height:13px;color:#aeb4ba;letter-spacing:-0.185px;font-style:italic;">since Segment 1:</span>
<span class="t" style="left:614.63px;top:387.00px;font-size:13px;line-height:13px;color:#aeb4ba;letter-spacing:-0.170px;font-style:italic;">between Segment :</span>
<span class="t" style="left:145.10px;top:418.00px;font-size:13px;line-height:13px;color:#ececec;letter-spacing:0.105px;">1)</span>
<span class="t" style="left:262.54px;top:418.00px;font-size:13px;line-height:13px;color:#ececec;letter-spacing:-0.348px;">9-March-2018</span>
<span class="t" style="left:347.10px;top:418.00px;font-size:13px;line-height:13px;color:#ececec;letter-spacing:-0.343px;">17:31:06</span>
<span class="t" style="left:145.62px;top:433.00px;font-size:13px;line-height:13px;color:#ececec;letter-spacing:-0.415px;">2)</span>
<span class="t" style="left:262.54px;top:433.00px;font-size:13px;line-height:13px;color:#ececec;letter-spacing:-0.348px;">9-March-2018</span>
<span class="t" style="left:347.10px;top:433.00px;font-size:13px;line-height:13px;color:#ececec;letter-spacing:-0.343px;">17:31:06</span>
<span class="t" style="left:518.96px;top:433.00px;font-size:13px;line-height:13px;color:#ececec;letter-spacing:-0.347px;">3.000 µs</span>
<span class="t" style="left:689.16px;top:433.00px;font-size:13px;line-height:13px;color:#ececec;letter-spacing:-0.396px;">3.000 µs</span>
<span class="t" style="left:145.57px;top:448.00px;font-size:13px;line-height:13px;color:#ececec;letter-spacing:-0.360px;">3)</span>
<span class="t" style="left:262.54px;top:448.00px;font-size:13px;line-height:13px;color:#ececec;letter-spacing:-0.348px;">9-March-2018</span>
<span class="t" style="left:347.10px;top:448.00px;font-size:13px;line-height:13px;color:#ececec;letter-spacing:-0.343px;">17:31:06</span>
<span class="t" style="left:518.55px;top:448.00px;font-size:13px;line-height:13px;color:#ececec;letter-spacing:-0.289px;">6.000 µs</span>
<span class="t" style="left:689.16px;top:448.00px;font-size:13px;line-height:13px;color:#ececec;letter-spacing:-0.396px;">3.000 µs</span>
<span class="t" style="left:146.10px;top:463.00px;font-size:13px;line-height:13px;color:#ececec;letter-spacing:-0.895px;">4)</span>
<span class="t" style="left:262.54px;top:463.00px;font-size:13px;line-height:13px;color:#ececec;letter-spacing:-0.348px;">9-March-2018</span>
<span class="t" style="left:347.10px;top:463.00px;font-size:13px;line-height:13px;color:#ececec;letter-spacing:-0.343px;">17:31:06</span>
<span class="t" style="left:518.54px;top:463.00px;font-size:13px;line-height:13px;color:#ececec;letter-spacing:-0.287px;">9.000 µs</span>
<span class="t" style="left:689.16px;top:463.00px;font-size:13px;line-height:13px;color:#ececec;letter-spacing:-0.396px;">3.000 µs</span>
<span class="t" style="left:145.58px;top:478.00px;font-size:13px;line-height:13px;color:#ececec;letter-spacing:-0.380px;">5)</span>
<span class="t" style="left:262.54px;top:478.00px;font-size:13px;line-height:13px;color:#ececec;letter-spacing:-0.348px;">9-March-2018</span>
<span class="t" style="left:347.10px;top:478.00px;font-size:13px;line-height:13px;color:#ececec;letter-spacing:-0.343px;">17:31:06</span>
<span class="t" style="left:512.10px;top:478.00px;font-size:13px;line-height:13px;color:#ececec;letter-spacing:-0.394px;">12.000 µs</span>
<span class="t" style="left:689.16px;top:478.00px;font-size:13px;line-height:13px;color:#ececec;letter-spacing:-0.396px;">3.000 µs</span>
<span class="t" style="left:145.62px;top:493.00px;font-size:13px;line-height:13px;color:#ececec;letter-spacing:-0.415px;">6)</span>
<span class="t" style="left:262.54px;top:493.00px;font-size:13px;line-height:13px;color:#ececec;letter-spacing:-0.348px;">9-March-2018</span>
<span class="t" style="left:347.10px;top:493.00px;font-size:13px;line-height:13px;color:#ececec;letter-spacing:-0.343px;">17:31:06</span>
<span class="t" style="left:512.10px;top:493.00px;font-size:13px;line-height:13px;color:#ececec;letter-spacing:-0.394px;">15.000 µs</span>
<span class="t" style="left:689.16px;top:493.00px;font-size:13px;line-height:13px;color:#ececec;letter-spacing:-0.396px;">3.000 µs</span>
<span class="t" style="left:145.62px;top:508.00px;font-size:13px;line-height:13px;color:#ececec;letter-spacing:-0.415px;">7)</span>
<span class="t" style="left:262.54px;top:508.00px;font-size:13px;line-height:13px;color:#ececec;letter-spacing:-0.348px;">9-March-2018</span>
<span class="t" style="left:347.10px;top:508.00px;font-size:13px;line-height:13px;color:#ececec;letter-spacing:-0.343px;">17:31:06</span>
<span class="t" style="left:512.10px;top:508.00px;font-size:13px;line-height:13px;color:#ececec;letter-spacing:-0.394px;">18.000 µs</span>
<span class="t" style="left:689.16px;top:508.00px;font-size:13px;line-height:13px;color:#ececec;letter-spacing:-0.396px;">3.000 µs</span>
<span class="t" style="left:145.84px;top:523.00px;font-size:13px;line-height:13px;color:#ececec;letter-spacing:-0.640px;">8)</span>
<span class="t" style="left:262.54px;top:523.00px;font-size:13px;line-height:13px;color:#ececec;letter-spacing:-0.348px;">9-March-2018</span>
<span class="t" style="left:347.10px;top:523.00px;font-size:13px;line-height:13px;color:#ececec;letter-spacing:-0.343px;">17:31:06</span>
<span class="t" style="left:512.55px;top:523.00px;font-size:13px;line-height:13px;color:#ececec;letter-spacing:-0.451px;">21.000 µs</span>
<span class="t" style="left:689.16px;top:523.00px;font-size:13px;line-height:13px;color:#ececec;letter-spacing:-0.396px;">3.000 µs</span>
<span class="t" style="left:145.60px;top:538.00px;font-size:13px;line-height:13px;color:#ececec;letter-spacing:-0.395px;">9)</span>
<span class="t" style="left:262.54px;top:538.00px;font-size:13px;line-height:13px;color:#ececec;letter-spacing:-0.348px;">9-March-2018</span>
<span class="t" style="left:347.10px;top:538.00px;font-size:13px;line-height:13px;color:#ececec;letter-spacing:-0.343px;">17:31:06</span>
<span class="t" style="left:512.55px;top:538.00px;font-size:13px;line-height:13px;color:#ececec;letter-spacing:-0.451px;">24.000 µs</span>
<span class="t" style="left:689.16px;top:538.00px;font-size:13px;line-height:13px;color:#ececec;letter-spacing:-0.396px;">3.000 µs</span>
<span class="t" style="left:145.10px;top:553.00px;font-size:13px;line-height:13px;color:#ececec;letter-spacing:0.052px;">10)</span>
<span class="t" style="left:262.54px;top:553.00px;font-size:13px;line-height:13px;color:#ececec;letter-spacing:-0.348px;">9-March-2018</span>
<span class="t" style="left:347.10px;top:553.00px;font-size:13px;line-height:13px;color:#ececec;letter-spacing:-0.343px;">17:31:06</span>
<span class="t" style="left:512.55px;top:553.00px;font-size:13px;line-height:13px;color:#ececec;letter-spacing:-0.451px;">27.000 µs</span>
<span class="t" style="left:689.16px;top:553.00px;font-size:13px;line-height:13px;color:#ececec;letter-spacing:-0.396px;">3.000 µs</span>
<span class="t" style="left:6.95px;top:585.00px;font-size:14.5px;line-height:14.5px;color:#f4f4f4;letter-spacing:0.000px;font-weight:bold;transform-origin:0 0;transform:scaleX(0.8592);">TELEDYNE</span>
<span class="t" style="left:77.10px;top:585.00px;font-size:14.5px;line-height:14.5px;color:#d8d8d8;letter-spacing:0.000px;transform-origin:0 0;transform:scaleX(0.7685);">LECROY</span>
</body>
</html>
